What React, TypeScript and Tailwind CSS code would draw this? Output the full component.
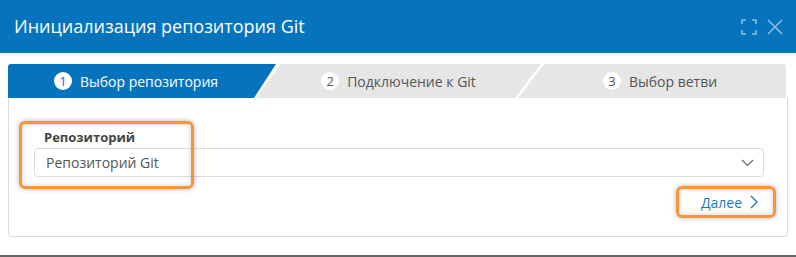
import React from "react";

function ExpandIcon() {
  return (
    <svg width="16" height="16" viewBox="0 0 16 16" fill="none" stroke="#86bde6" strokeWidth="1.6">
      <path d="M1 5V1h4M11 1h4v4M15 11v4h-4M5 15H1v-4" />
    </svg>
  );
}

function CloseIcon() {
  return (
    <svg width="16" height="16" viewBox="0 0 16 16" fill="none" stroke="#86bde6" strokeWidth="1.6">
      <path d="M1 1l14 14M15 1L1 15" />
    </svg>
  );
}

function StepCircle({ n, active }: { n: number; active?: boolean }) {
  return (
    <span
      className={
        "flex h-[18px] w-[18px] items-center justify-center rounded-full bg-white text-[13px] leading-none " +
        (active ? "text-[#0674bc]" : "text-[#555]")
      }
    >
      {n}
    </span>
  );
}

export default function App() {
  return (
    <div className="flex h-[257px] w-[796px] flex-col bg-white font-['Open_Sans',sans-serif]">
      {/* header */}
      <div className="flex h-[53px] items-center justify-between bg-[#0674bc] pl-[14px] pr-[13px]">
        <h1 className="text-[18px] text-white">Инициализация репозитория Git</h1>
        <div className="flex items-center gap-[10px]">
          <ExpandIcon />
          <CloseIcon />
        </div>
      </div>

      {/* steps */}
      <div className="mt-[11px] flex h-[34px] px-2">
        <div className="flex w-[268px] items-center justify-center gap-[8px] rounded-tl-[3px] bg-[#0674bc] pr-[12px] text-[14px] text-white [clip-path:polygon(0_0,268px_0,246px_34px,0_34px)]">
          <StepCircle n={1} active />
          <span>Выбор репозитория</span>
        </div>
        <div className="-ml-[20px] flex w-[285px] items-center justify-center gap-[8px] bg-[#e6e6e6] text-[14px] text-[#555] [clip-path:polygon(25px_0,285px_0,259px_34px,0_34px)]">
          <StepCircle n={2} />
          <span>Подключение к Git</span>
        </div>
        <div className="-ml-[23px] flex w-[268px] items-center justify-center gap-[8px] rounded-tr-[3px] bg-[#e6e6e6] pl-4 text-[14px] text-[#555] [clip-path:polygon(26px_0,268px_0,268px_34px,0_34px)]">
          <StepCircle n={3} />
          <span>Выбор ветви</span>
        </div>
      </div>

      {/* panel */}
      <div className="mx-2 flex h-[139px] flex-col rounded-b-[4px] border border-t-0 border-[#dcdcdc] pl-[25px] pr-[23px] pt-[31px]">
        <div className="relative">
          <label className="block pl-[10px] text-[13px] font-bold leading-4 text-[#444]">Репозиторий</label>
          <div className="mt-[3px] flex h-[29px] items-center justify-between rounded-[4px] border border-[#dcdcdc] pl-[11px] pr-[9px] text-[14px] text-[#555]">
            <span>Репозиторий Git</span>
            <svg width="13" height="8" viewBox="0 0 13 8" fill="none" stroke="#666" strokeWidth="1.2">
              <path d="M1 1l5.5 5.5L12 1" />
            </svg>
          </div>
          <div className="absolute left-[-15px] top-[-8px] h-[68px] w-[175px] rounded-[6px] border-[3px] border-[#f7953b] shadow-[0_0_5px_rgba(0,0,0,0.3),inset_0_0_5px_rgba(0,0,0,0.2)]" />
        </div>
        <div className="mt-[9px] flex justify-end">
          <button className="relative flex h-[32px] items-center gap-[8px] pl-3 pr-[6px] text-[14px] text-[#1a77bd]">
            <span>Далее</span>
            <svg width="8" height="14" viewBox="0 0 8 14" fill="none" stroke="#1a77bd" strokeWidth="1.3">
              <path d="M1 1l6 6-6 6" />
            </svg>
            <span className="absolute bottom-0 left-[-13px] right-[-12px] top-0 rounded-[6px] border-[3px] border-[#f7953b] shadow-[0_0_5px_rgba(0,0,0,0.3),inset_0_0_5px_rgba(0,0,0,0.2)]" />
          </button>
        </div>
      </div>

      <div className="mt-auto h-[2px] bg-[#666]" />
    </div>
  );
}
